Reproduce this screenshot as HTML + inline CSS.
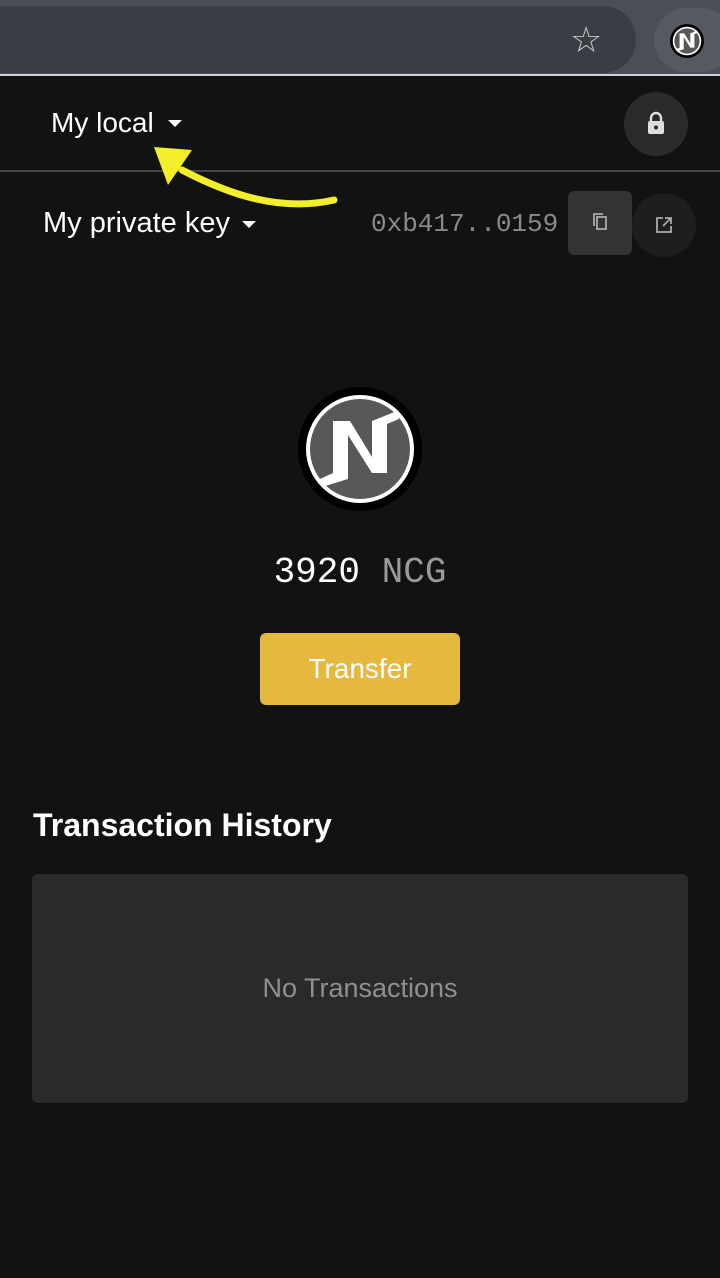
<!DOCTYPE html>
<html><head><meta charset="utf-8"><style>
*{margin:0;padding:0;box-sizing:border-box}
body{width:720px;height:1278px;background:#121212;font-family:"Liberation Sans",sans-serif;position:relative;overflow:hidden;color:#fff}
.abs{position:absolute}
.mono{font-family:"Liberation Mono",monospace}
</style></head><body>
<div class="abs" style="left:0;top:0;width:720px;height:75px;background:#4a4e55"></div>
<div class="abs" style="left:-40px;top:6px;width:676px;height:67px;background:#3a3d43;border-radius:34px"></div>
<div class="abs" style="left:0;top:74px;width:720px;height:2px;background:#cfd0d2"></div>
<div class="abs" style="left:570px;top:22px;font-size:36px;color:#c8c9cb;line-height:36px">☆</div>
<div class="abs" style="left:654px;top:8px;width:80px;height:64px;border-radius:32px;background:#565a60"></div>
<svg class="abs" style="left:670px;top:24px" width="34" height="34" viewBox="0 0 124 124"><circle cx="62" cy="62" r="62" fill="#000"/><circle cx="62" cy="62" r="52" fill="#fff"/><circle cx="62" cy="62" r="46" fill="#585858"/><path d="M35 34H52L74 70V34L99 24L101 32L89 37V86H74L50 48V92L24 100L22 92L35 86Z" fill="#fff"/></svg>

<div class="abs" style="left:51px;top:107px;font-size:28px">My local</div>
<div class="abs" style="left:168px;top:120px;border-left:7px solid transparent;border-right:7px solid transparent;border-top:7px solid #fff"></div>
<div class="abs" style="left:624px;top:92px;width:64px;height:64px;border-radius:32px;background:#2a2a2a"></div>
<svg class="abs" style="left:645px;top:111px" width="22" height="24" viewBox="0 0 22 24"><path d="M6 10V7a5 5 0 0 1 10 0v3" stroke="#ddd" stroke-width="2.4" fill="none"/><rect x="3" y="10" width="16" height="13" rx="2" fill="#ddd"/><circle cx="11" cy="16.5" r="2" fill="#2a2a2a"/></svg>
<div class="abs" style="left:0;top:170px;width:720px;height:2px;background:#444"></div>
<svg class="abs" style="left:140px;top:140px" width="210" height="75" viewBox="0 0 210 75"><path d="M194 60C140 72 90 55 42 30" stroke="#f3ee2a" stroke-width="7" fill="none" stroke-linecap="round"/><path d="M14 7L52 10L28 45Z" fill="#f3ee2a"/></svg>

<div class="abs" style="left:43px;top:207px;font-size:29px">My private key</div>
<div class="abs" style="left:242px;top:221px;border-left:7px solid transparent;border-right:7px solid transparent;border-top:7px solid #fff"></div>
<div class="abs mono" style="left:371px;top:209px;font-size:26px;color:#8a8a8a">0xb417..0159</div>
<div class="abs" style="left:568px;top:191px;width:64px;height:64px;border-radius:6px;background:#333"></div>
<svg class="abs" style="left:591px;top:212px" width="18" height="20" viewBox="0 0 18 20"><path d="M3 14V2h9" stroke="#aaa" stroke-width="1.8" fill="none"/><rect x="6" y="5" width="9" height="12" stroke="#aaa" stroke-width="1.8" fill="none"/></svg>
<div class="abs" style="left:632px;top:193px;width:64px;height:64px;border-radius:32px;background:#1e1e1e"></div>
<svg class="abs" style="left:655px;top:216px" width="18" height="18" viewBox="0 0 18 18"><path d="M8 2H2v14h14v-6M10 2h6v6M16 2L8 10" stroke="#aaa" stroke-width="1.8" fill="none"/></svg>

<svg class="abs" style="left:298px;top:387px" width="124" height="124" viewBox="0 0 124 124"><circle cx="62" cy="62" r="62" fill="#000"/><circle cx="62" cy="62" r="54" fill="#fff"/><circle cx="62" cy="62" r="50" fill="#585858"/><path d="M35 34H52L74 70V34L99 24L101 32L89 37V86H74L50 48V92L24 100L22 92L35 86Z" fill="#fff"/></svg>

<div class="abs mono" style="left:0;width:720px;text-align:center;top:552px;font-size:36px"><span style="color:#fff">3920</span> <span style="color:#9a9a9a">NCG</span></div>
<div class="abs" style="left:260px;top:633px;width:200px;height:72px;background:#e6b93e;border-radius:6px;font-size:28px;text-align:center;line-height:72px">Transfer</div>
<div class="abs" style="left:33px;top:807px;font-size:32px;font-weight:bold">Transaction History</div>
<div class="abs" style="left:32px;top:874px;width:656px;height:229px;background:#2a2a2a;border-radius:6px;color:#8f8f8f;font-size:27px;text-align:center;line-height:229px">No Transactions</div>
</body></html>
